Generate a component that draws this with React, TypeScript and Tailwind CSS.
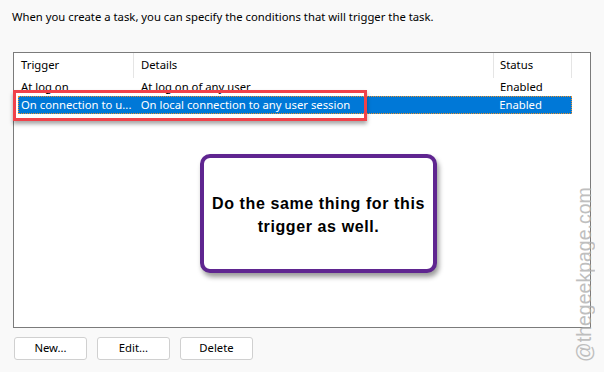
import React from "react";

const ui = { fontFamily: '"Noto Sans", "Open Sans", sans-serif' };

export default function App() {
  return (
    <div className="relative w-[604px] h-[372px] overflow-hidden bg-[#f9f9f9] text-black" style={ui}>
      <div className="pl-[12px] pt-[8px] h-[52px] text-[11.3px] leading-[18px]">
        When you create a task, you can specify the conditions that will trigger the task.
      </div>
      <div className="ml-[13px] w-[578px] h-[276px] border border-[#7b7b7b] bg-white flex flex-col text-[11.3px]">
        <div className="flex h-[25px] items-center">
          <div className="w-[120px] h-full pl-[7px] flex items-center border-r border-[#e5e5e5]">Trigger</div>
          <div className="w-[360px] h-full pl-[7px] flex items-center border-r border-[#e5e5e5]">Details</div>
          <div className="w-[78px] h-full pl-[6px] flex items-center border-r border-[#e5e5e5]">Status</div>
        </div>
        <div className="flex h-[18px] items-center">
          <div className="w-[120px] pl-[7px]">At log on</div>
          <div className="w-[360px] pl-[7px]">At log on of any user</div>
          <div className="w-[78px] pl-[6px]">Enabled</div>
        </div>
        <div className="flex h-[18px] items-center ml-[4px] w-[554px] bg-[#0078d7] text-white border border-dotted border-[#e8912d]">
          <div className="w-[115px] pl-[2px] whitespace-nowrap">On connection to u...</div>
          <div className="w-[360px] pl-[7px]">On local connection to any user session</div>
          <div className="w-[78px] pl-[6px]">Enabled</div>
        </div>
      </div>
      <div className="flex gap-[10px] ml-[14px] mt-[9px] text-[11.3px]">
        {["New...", "Edit...", "Delete"].map((t) => (
          <div
            key={t}
            className="w-[73px] h-[23px] bg-white border border-[#d0d0d0] rounded-[3px] flex items-center justify-center"
          >
            {t}
          </div>
        ))}
      </div>

      <div className="absolute left-[13px] top-[90px] w-[354px] h-[31px] border-[3px] border-[#f0424a] shadow-[0_3px_4px_rgba(0,0,0,0.35)]" />

      <div
        className="absolute left-[200px] top-[154px] w-[237px] h-[119px] bg-white border-[4px] border-[#5f2590] rounded-[10px] shadow-[2px_4px_5px_rgba(0,0,0,0.4)] flex items-center justify-center text-center text-[16px] tracking-[0.6px] leading-[23px] font-bold"
        style={{ fontFamily: '"Liberation Sans", Arial, sans-serif' }}
      >
        <div className="pt-[2px]">
          Do the same thing for this
          <br />
          trigger as well.
        </div>
      </div>

      <div className="absolute left-[584px] top-[275px] w-0 h-0 flex items-center justify-center">
        <div
          className="-rotate-90 whitespace-nowrap text-[19.5px] text-[#b0b0b0] opacity-80"
          style={{ fontFamily: '"Liberation Sans", Arial, sans-serif' }}
        >
          @thegeekpage.com
        </div>
      </div>
    </div>
  );
}
